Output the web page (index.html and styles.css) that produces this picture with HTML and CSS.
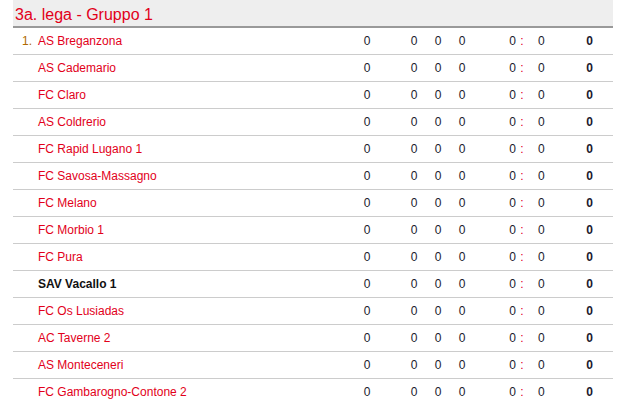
FILE: index.html
```html
<!DOCTYPE html>
<html>
<head>
<meta charset="utf-8">
<link rel="stylesheet" href="styles.css">
</head>
<body>
<div class="wrap">
  <h2 class="title">3a. lega - Gruppo 1</h2>
  <table class="standings">
    <tbody>
      <tr><td class="rank">1.</td><td class="team">AS Breganzona</td><td class="n">0</td><td class="gap"></td><td class="n">0</td><td class="n">0</td><td class="n">0</td><td class="gf">0</td><td class="colon">:</td><td class="ga">0</td><td class="pts">0</td></tr>
      <tr><td class="rank"></td><td class="team">AS Cademario</td><td class="n">0</td><td class="gap"></td><td class="n">0</td><td class="n">0</td><td class="n">0</td><td class="gf">0</td><td class="colon">:</td><td class="ga">0</td><td class="pts">0</td></tr>
      <tr><td class="rank"></td><td class="team">FC Claro</td><td class="n">0</td><td class="gap"></td><td class="n">0</td><td class="n">0</td><td class="n">0</td><td class="gf">0</td><td class="colon">:</td><td class="ga">0</td><td class="pts">0</td></tr>
      <tr><td class="rank"></td><td class="team">AS Coldrerio</td><td class="n">0</td><td class="gap"></td><td class="n">0</td><td class="n">0</td><td class="n">0</td><td class="gf">0</td><td class="colon">:</td><td class="ga">0</td><td class="pts">0</td></tr>
      <tr><td class="rank"></td><td class="team">FC Rapid Lugano 1</td><td class="n">0</td><td class="gap"></td><td class="n">0</td><td class="n">0</td><td class="n">0</td><td class="gf">0</td><td class="colon">:</td><td class="ga">0</td><td class="pts">0</td></tr>
      <tr><td class="rank"></td><td class="team">FC Savosa-Massagno</td><td class="n">0</td><td class="gap"></td><td class="n">0</td><td class="n">0</td><td class="n">0</td><td class="gf">0</td><td class="colon">:</td><td class="ga">0</td><td class="pts">0</td></tr>
      <tr><td class="rank"></td><td class="team">FC Melano</td><td class="n">0</td><td class="gap"></td><td class="n">0</td><td class="n">0</td><td class="n">0</td><td class="gf">0</td><td class="colon">:</td><td class="ga">0</td><td class="pts">0</td></tr>
      <tr><td class="rank"></td><td class="team">FC Morbio 1</td><td class="n">0</td><td class="gap"></td><td class="n">0</td><td class="n">0</td><td class="n">0</td><td class="gf">0</td><td class="colon">:</td><td class="ga">0</td><td class="pts">0</td></tr>
      <tr><td class="rank"></td><td class="team">FC Pura</td><td class="n">0</td><td class="gap"></td><td class="n">0</td><td class="n">0</td><td class="n">0</td><td class="gf">0</td><td class="colon">:</td><td class="ga">0</td><td class="pts">0</td></tr>
      <tr><td class="rank"></td><td class="team own">SAV Vacallo 1</td><td class="n">0</td><td class="gap"></td><td class="n">0</td><td class="n">0</td><td class="n">0</td><td class="gf">0</td><td class="colon">:</td><td class="ga">0</td><td class="pts">0</td></tr>
      <tr><td class="rank"></td><td class="team">FC Os Lusiadas</td><td class="n">0</td><td class="gap"></td><td class="n">0</td><td class="n">0</td><td class="n">0</td><td class="gf">0</td><td class="colon">:</td><td class="ga">0</td><td class="pts">0</td></tr>
      <tr><td class="rank"></td><td class="team">AC Taverne 2</td><td class="n">0</td><td class="gap"></td><td class="n">0</td><td class="n">0</td><td class="n">0</td><td class="gf">0</td><td class="colon">:</td><td class="ga">0</td><td class="pts">0</td></tr>
      <tr><td class="rank"></td><td class="team">AS Monteceneri</td><td class="n">0</td><td class="gap"></td><td class="n">0</td><td class="n">0</td><td class="n">0</td><td class="gf">0</td><td class="colon">:</td><td class="ga">0</td><td class="pts">0</td></tr>
      <tr><td class="rank"></td><td class="team">FC Gambarogno-Contone 2</td><td class="n">0</td><td class="gap"></td><td class="n">0</td><td class="n">0</td><td class="n">0</td><td class="gf">0</td><td class="colon">:</td><td class="ga">0</td><td class="pts">0</td></tr>
    </tbody>
  </table>
</div>
</body>
</html>
```

FILE: styles.css
```css
html, body {
  margin: 0;
  padding: 0;
  background: #fff;
}
body {
  font-family: "Liberation Sans", Arial, sans-serif;
}
.wrap {
  width: 600px;
  margin-left: 13px;
}
.title {
  margin: 0;
  height: 23px;
  padding: 3px 0 0 2px;
  line-height: 24px;
  background: #eeeeee;
  border-bottom: 2px solid #999;
  font-size: 16px;
  font-weight: normal;
  color: #e2001a;
}
.standings {
  width: 600px;
  border-collapse: collapse;
  table-layout: fixed;
  font-size: 12px;
}
.standings td {
  height: 26px;
  padding: 0;
  border-bottom: 1px solid #cccccc;
  color: #1a1a2e;
  text-align: center;
  white-space: nowrap;
}
.standings tr:last-child td {
  border-bottom: none;
}
.standings td.rank {
  width: 19px;
  text-align: right;
  padding-right: 6px;
  color: #b06a00;
}
.standings td.team {
  width: 317px;
  text-align: left;
  color: #e2001a;
}
.standings td.own {
  color: #111;
  font-weight: bold;
}
.standings td.n {
  width: 24px;
}
.standings td.gap {
  width: 23px;
}
.standings td.gf {
  width: 42px;
  text-align: right;
}
.standings td.colon {
  width: 12px;
  color: #e2001a;
}
.standings td.ga {
  width: 22px;
  text-align: left;
  padding-left: 10px;
}
.standings td.pts {
  font-weight: bold;
  text-align: right;
  padding-right: 20px;
}
```
